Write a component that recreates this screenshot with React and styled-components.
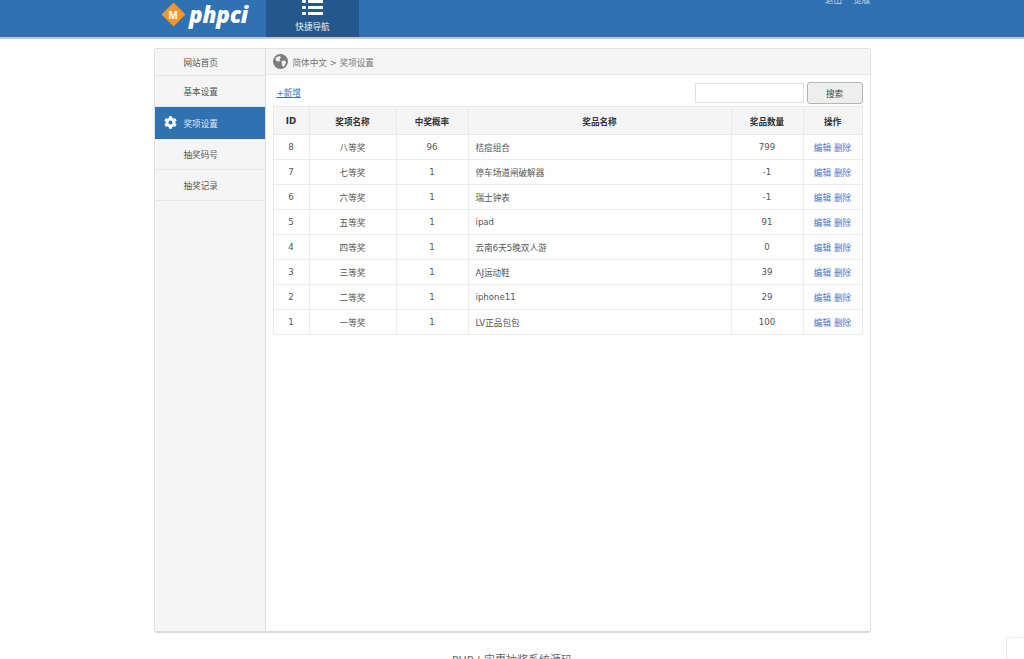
import React from 'react';
import styled, { createGlobalStyle } from 'styled-components';
import { FaCog } from 'react-icons/fa';

const GlobalStyle = createGlobalStyle`
  html, body {
    margin: 0;
    height: 100%;
    overflow: hidden;
    background: #fefefe;
  }
  body {
    font-family: "DejaVu Sans", "Noto Sans CJK SC", sans-serif;
    font-size: 8.6px;
    color: #555;
  }
`;

const Page = styled.div`
  height: 659px;
  overflow: hidden;
`;

const Header = styled.header`
  height: 37px;
  background: #3071b1;
  border-bottom: 2px solid #c4c8cc;
  display: flex;
  justify-content: center;
  overflow: hidden;
`;

const HeaderInner = styled.div`
  width: 716px;
  display: flex;
`;

const Logo = styled.div`
  width: 112px;
  padding-left: 9px;
  box-sizing: border-box;
  display: flex;
  align-items: center;
  gap: 5px;
  height: 29px;
`;

const Diamond = styled.span`
  width: 17px;
  height: 17px;
  background: #f0972a;
  transform: rotate(45deg);
  display: flex;
  align-items: center;
  justify-content: center;
  flex-shrink: 0;
  margin-left: 2px;

  b {
    transform: rotate(-45deg);
    color: #fff;
    font-size: 11px;
    font-family: "Liberation Sans", sans-serif;
  }
`;

const LogoText = styled.span`
  font-family: "Open Sans", sans-serif;
  font-style: italic;
  font-weight: 800;
  font-size: 22.5px;
  line-height: 29px;
  color: #fff;
  letter-spacing: -0.2px;
  margin-left: 2px;
`;

const NavTab = styled.div`
  width: 93px;
  background: #24578c;
  color: #f0f4f8;
  display: flex;
  flex-direction: column;
  align-items: center;

  span {
    margin-top: 4px;
    line-height: 14px;
  }
`;

const UserLinks = styled.div`
  margin-left: auto;
  margin-top: -6px;
  width: 45px;
  display: flex;
  gap: 11px;
  height: 12px;
  line-height: 12px;
  color: #b9d2ec;
  white-space: nowrap;
`;

const Panel = styled.main`
  width: 715px;
  height: 582px;
  margin: 9px auto 0;
  border: 1px solid #e2e2e2;
  border-bottom: 2px solid #dcdcdc;
  border-radius: 3px;
  display: flex;
  background: #fefefe;
`;

const Sidebar = styled.nav`
  width: 110px;
  background: #f5f5f5;
  border-right: 1px solid #dedede;
  flex-shrink: 0;
`;

const MenuItem = styled.div`
  height: ${props => props.$height}px;
  box-sizing: border-box;
  padding-left: 29px;
  display: flex;
  align-items: center;
  position: relative;
  background: ${props => (props.$active ? '#3071b1' : 'transparent')};
  color: ${props => (props.$active ? '#dfeaf5' : '#555')};
  border-bottom: 1px solid ${props => (props.$active ? '#3071b1' : '#e6e6e6')};

  svg {
    position: absolute;
    left: 9px;
    color: #fff;
    font-size: 13px;
  }
`;

const Content = styled.section`
  flex: 1;
  min-width: 0;
`;

const Crumb = styled.div`
  height: 26px;
  box-sizing: border-box;
  background: #f5f5f5;
  border-bottom: 1px solid #e6e6e6;
  display: flex;
  align-items: center;
  gap: 5px;
  padding-left: 7px;
  color: #777;
`;

const Toolbar = styled.div`
  height: 31px;
  display: flex;
  align-items: center;
  justify-content: space-between;
  padding: 0 8px 0 11px;
`;

const AddLink = styled.a`
  color: #3a6fc0;
  text-decoration: underline;
  margin-top: 3px;
`;

const SearchForm = styled.form`
  display: flex;
  gap: 3px;
  margin-top: 5px;
  margin-right: -1px;
`;

const SearchInput = styled.input`
  width: 109px;
  height: 20px;
  box-sizing: border-box;
  border: 1px solid #e0e0e0;
  background: #fff;
  margin: 1px 0 0;
  padding: 0 4px;
`;

const SearchButton = styled.button`
  width: 56px;
  height: 22px;
  background: #eeeeee;
  border: 1px solid #b5b5b5;
  border-radius: 3px;
  color: #444;
  font: inherit;
  padding: 0;
`;

const TableWrap = styled.div`
  padding: 0 8px 0 7px;
`;

const Table = styled.table`
  width: 589px;
  table-layout: fixed;
  border-collapse: collapse;
`;

const Th = styled.th`
  height: 28px;
  box-sizing: border-box;
  padding: 0;
  background: #f5f5f5;
  border: 1px solid #e8e8e8;
  color: #333;
  font-weight: 700;
`;

const Td = styled.td`
  height: 25px;
  box-sizing: border-box;
  padding: ${props => (props.$left ? '0 0 1px 7px' : '0 0 1px')};
  border: 1px solid #ececec;
  text-align: ${props => (props.$left ? 'left' : 'center')};
  color: #555;
`;

const ActionLink = styled.a`
  color: #4a76c4;
  margin: 0 1.5px;
`;

const Footer = styled.footer`
  margin-top: 22px;
  text-align: center;
  color: #666;
  font-size: 11px;
  line-height: 12px;
`;

const ScrollTip = styled.div`
  position: fixed;
  right: -6px;
  top: 637px;
  width: 22px;
  height: 22px;
  border: 1px solid #ececec;
  border-radius: 4px;
`;

const menu = [
  { label: '网站首页', height: 27 },
  { label: '基本设置', height: 31 },
  { label: '奖项设置', height: 32, active: true },
  { label: '抽奖码号', height: 31 },
  { label: '抽奖记录', height: 31 },
];

const columns = [
  { title: 'ID', width: 36 },
  { title: '奖项名称', width: 87 },
  { title: '中奖概率', width: 72 },
  { title: '奖品名称', width: 263 },
  { title: '奖品数量', width: 72 },
  { title: '操作', width: 59 },
];

const prizes = [
  [8, '八等奖', 96, '桔痘组合', 799],
  [7, '七等奖', 1, '停车场道闸破解器', -1],
  [6, '六等奖', 1, '瑞士钟表', -1],
  [5, '五等奖', 1, 'ipad', 91],
  [4, '四等奖', 1, '云南6天5晚双人游', 0],
  [3, '三等奖', 1, 'AJ运动鞋', 39],
  [2, '二等奖', 1, 'iphone11', 29],
  [1, '一等奖', 1, 'LV正品包包', 100],
];

function ListIcon() {
  return (
    <svg width="21" height="16" viewBox="0 0 21 16" fill="#fff">
      <rect x="0" y="0" width="4" height="3" rx="1" />
      <rect x="6" y="0" width="15" height="3" />
      <rect x="0" y="6" width="4" height="3" rx="1" />
      <rect x="6" y="6" width="15" height="3" />
      <rect x="0" y="12" width="4" height="3" rx="1" />
      <rect x="6" y="12" width="15" height="3" />
    </svg>
  );
}

function GlobeIcon() {
  return (
    <svg width="15" height="15" viewBox="0 0 15 15">
      <circle cx="7.5" cy="7.5" r="7.5" fill="#7d7d7d" />
      <path d="M3 3.5 6.5 2 8 3.5 6.5 5 7 7 4.5 7.5 2.5 6Z" fill="#f5f5f5" />
      <path d="M8.5 7 12 6.5 13 9 10.5 13 9 11Z" fill="#f5f5f5" />
    </svg>
  );
}

export default function App() {
  return (
    <Page>
      <GlobalStyle />
      <Header>
        <HeaderInner>
          <Logo>
            <Diamond><b>M</b></Diamond>
            <LogoText>phpci</LogoText>
          </Logo>
          <NavTab>
            <ListIcon />
            <span>快捷导航</span>
          </NavTab>
          <UserLinks>
            <span>退出</span>
            <span>览版</span>
          </UserLinks>
        </HeaderInner>
      </Header>
      <Panel>
        <Sidebar>
          {menu.map(item => (
            <MenuItem key={item.label} $height={item.height} $active={item.active}>
              {item.active && <FaCog />}
              {item.label}
            </MenuItem>
          ))}
        </Sidebar>
        <Content>
          <Crumb>
            <GlobeIcon />
            <span>简体中文 &gt; 奖项设置</span>
          </Crumb>
          <Toolbar>
            <AddLink href="#">+新增</AddLink>
            <SearchForm>
              <SearchInput type="text" />
              <SearchButton type="button">搜索</SearchButton>
            </SearchForm>
          </Toolbar>
          <TableWrap>
            <Table>
              <colgroup>
                {columns.map(col => <col key={col.title} width={col.width} />)}
              </colgroup>
              <thead>
                <tr>
                  {columns.map(col => <Th key={col.title}>{col.title}</Th>)}
                </tr>
              </thead>
              <tbody>
                {prizes.map(([id, level, rate, name, count]) => (
                  <tr key={id}>
                    <Td>{id}</Td>
                    <Td>{level}</Td>
                    <Td>{rate}</Td>
                    <Td $left>{name}</Td>
                    <Td>{count}</Td>
                    <Td>
                      <ActionLink>编辑</ActionLink>
                      <ActionLink>删除</ActionLink>
                    </Td>
                  </tr>
                ))}
              </tbody>
            </Table>
          </TableWrap>
        </Content>
      </Panel>
      <Footer>PHP | 实惠抽奖系统源码</Footer>
      <ScrollTip />
    </Page>
  );
}
